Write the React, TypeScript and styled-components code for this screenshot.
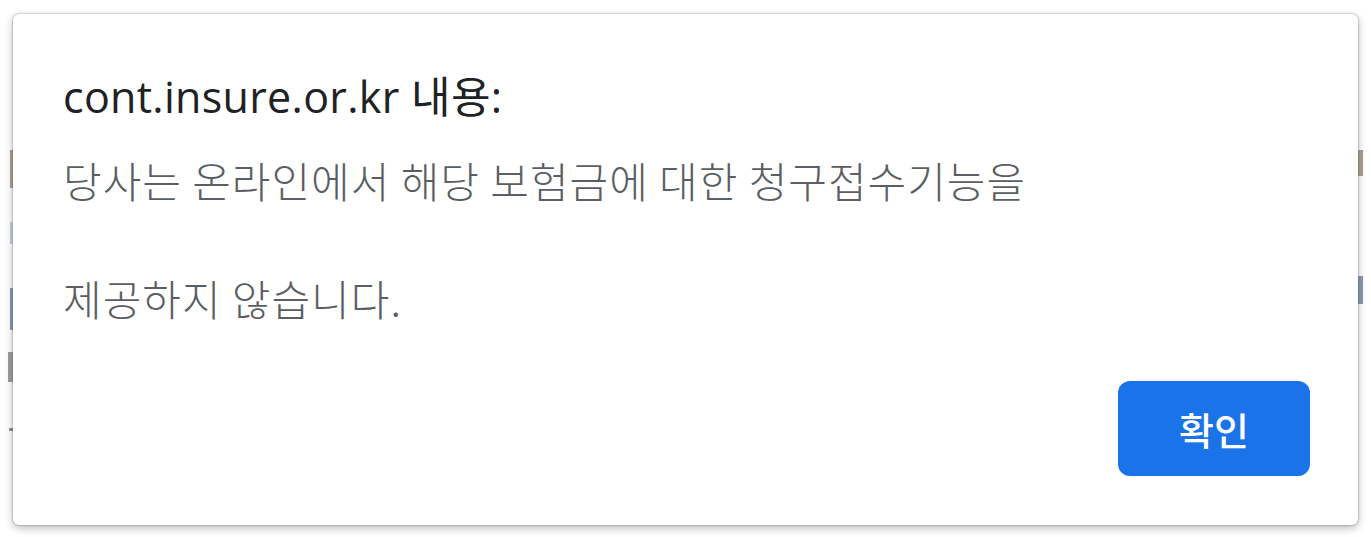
import * as React from 'react'
import styled, { createGlobalStyle } from 'styled-components'

const GlobalStyle = createGlobalStyle`
  html, body {
    margin: 0;
    padding: 0;
    background: #ffffff;
  }
  body {
    font-family: "Open Sans", "Noto Sans CJK KR", sans-serif;
  }
`

const Screen = styled.div`
  display: flex;
  width: 1371px;
  height: 537px;
  overflow: hidden;
  background: #ffffff;
`

const EdgeStrip = styled.div<{ $side: 'left' | 'right' }>`
  display: flex;
  flex-direction: column;
  align-items: ${p => (p.$side === 'left' ? 'flex-end' : 'flex-start')};
  width: 13px;
  flex: none;
  padding-top: 150px;
  box-sizing: border-box;
`

const Fragment = styled.div<{ $h: number; $gap: number; $color: string; $w?: number }>`
  width: ${p => p.$w ?? 3}px;
  height: ${p => p.$h}px;
  margin-bottom: ${p => p.$gap}px;
  background: ${p => p.$color};
  opacity: 0.6;
`

const DialogArea = styled.div`
  flex: 1;
  padding: 14px 0 12px;
  display: flex;
`

const Dialog = styled.div`
  flex: 1;
  display: flex;
  flex-direction: column;
  background: #ffffff;
  border-radius: 6px;
  box-shadow: 0 0 2px rgba(0, 0, 0, 0.45), 0 3px 8px rgba(0, 0, 0, 0.28);
  padding: 55px 48px 49px 50px;
  box-sizing: border-box;
`

const Title = styled.div`
  font-family: "Open Sans", "Noto Sans CJK KR", sans-serif;
  font-size: 43px;
  letter-spacing: 0.3px;
  line-height: 56px;
  color: #202124;
`

const Message = styled.div`
  margin-top: 26px;
  font-family: "Noto Sans CJK KR", "Open Sans", sans-serif;
  font-size: 42px;
  font-weight: 300;
  letter-spacing: 1px;
  line-height: 58px;
  color: #5a5e63;
  display: flex;
  flex-direction: column;
  gap: 60px;
`

const Footer = styled.div`
  margin-top: auto;
  display: flex;
  justify-content: flex-end;
`

const OkButton = styled.button`
  width: 192px;
  height: 95px;
  border: none;
  border-radius: 12px;
  background: #1a73e8;
  color: #ffffff;
  font-family: "Noto Sans CJK KR", sans-serif;
  font-size: 38px;
  font-weight: 500;
  cursor: pointer;
`

export default function App() {
  return (
    <>
      <GlobalStyle />
      <Screen>
        <EdgeStrip $side="left">
          <Fragment $h={38} $gap={34} $color="#6b5a44" />
          <Fragment $h={22} $gap={44} $color="#8ea0b8" />
          <Fragment $h={42} $gap={22} $color="#3e4f78" />
          <Fragment $h={30} $gap={46} $color="#555555" $w={5} />
          <Fragment $h={3} $gap={0} $color="#444444" $w={4} />
        </EdgeStrip>
        <DialogArea>
          <Dialog>
            <Title>cont.insure.or.kr 내용:</Title>
            <Message>
              <span>당사는 온라인에서 해당 보험금에 대한 청구접수기능을</span>
              <span>제공하지 않습니다.</span>
            </Message>
            <Footer>
              <OkButton>확인</OkButton>
            </Footer>
          </Dialog>
        </DialogArea>
        <EdgeStrip $side="right">
          <Fragment $h={26} $gap={100} $color="#6b5a44" $w={5} />
          <Fragment $h={28} $gap={0} $color="#3e4f78" $w={5} />
        </EdgeStrip>
      </Screen>
    </>
  )
}
